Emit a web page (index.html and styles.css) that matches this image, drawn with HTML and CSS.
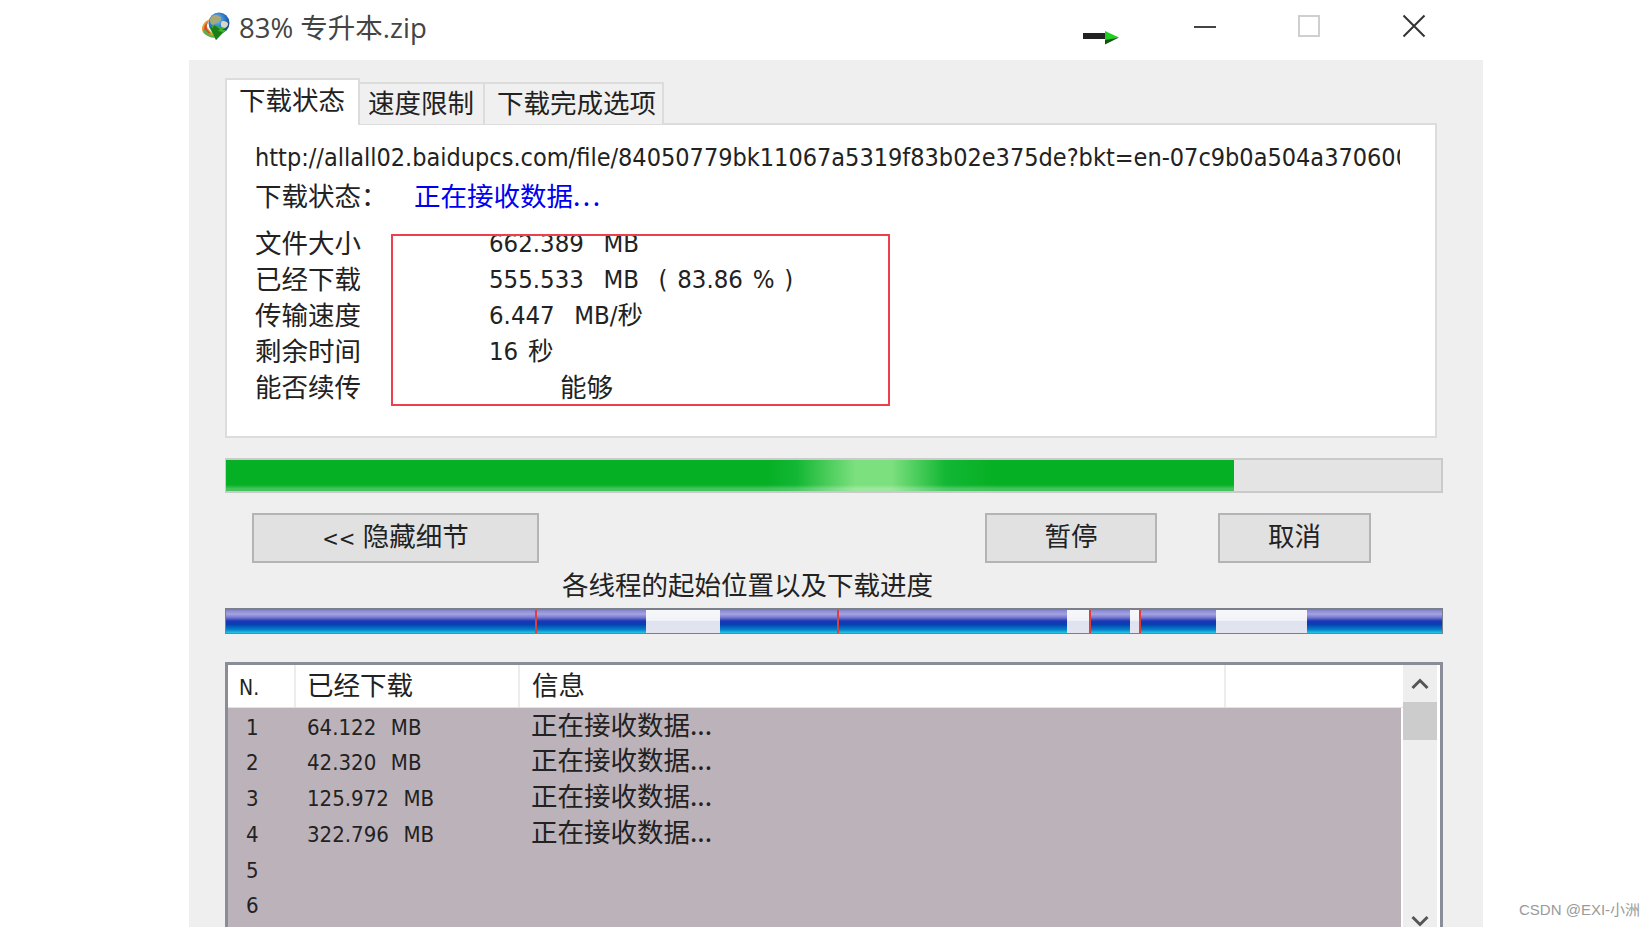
FILE: index.html
```html
<!DOCTYPE html>
<html lang="zh-CN">
<head>
  <meta charset="UTF-8" />
  <title>83% 专升本.zip</title>
  <link rel="stylesheet" href="styles.css">
</head>
<body>
  <div class="window">
    <div class="titlebar">
      <svg class="app-icon" width="30" height="28" viewBox="0 0 30 28">
        <defs>
          <radialGradient id="globe" cx="0.4" cy="0.35" r="0.7">
            <stop offset="0" stop-color="#7fc4ee"/>
            <stop offset="0.6" stop-color="#2672c4"/>
            <stop offset="1" stop-color="#123f7a"/>
          </radialGradient>
        </defs>
        <circle cx="18" cy="11" r="10.500" fill="url(#globe)"/>
        <path d="M14 3c3 0 6 1 6 4s-4 3-6 5-5 0-5-3 2-6 5-6z" fill="#a9a878"/>
        <path d="M22 9c2 0 5 1 5 3s-2 4-4 4-3-1-3-3 0-4 2-4z" fill="#d8d8c4"/>
        <path d="M1 17c0-5 4-9 9-10-3 2-5 5-4 8l3 4 6 5c-7 1-14-1-14-7z" fill="#e0a030"/>
        <path d="M3 17c0-3 2-6 5-8-2 3-3 5-2 8l4 5c-3-1-7-2-7-5z" fill="#d8462c"/>
        <path d="M5 18c1 3 6 6 11 6l-1 2c-6 0-13-3-13-9z" fill="#5cb04a"/>
        <path d="M11 13l13 3-3 2 4 0-10 10-7-13 3 1z" fill="#3cb52c"/>
        <path d="M15 28l-6-13 3 1 1-3 6 4-2 2 5 1z" fill="#1a7f1a"/>
      </svg>
      <span class="title">83% 专升本.zip</span>
      <svg class="arrow" width="36" height="14" viewBox="0 0 36 14">
        <rect x="0" y="2" width="24" height="6" fill="#222"/>
        <path d="M22 0l14 6.500-14 3z" fill="#1fd01f"/>
        <path d="M22 9l14-2.500-14 7z" fill="#0c5a0c"/>
      </svg>
      <svg class="caption cap-min" width="22" height="2" viewBox="0 0 22 2"><rect width="22" height="2" fill="#444"/></svg>
      <svg class="caption cap-max" width="22" height="22" viewBox="0 0 22 22"><rect x="1" y="1" width="20" height="20" fill="none" stroke="#cfcfcf" stroke-width="2"/></svg>
      <svg class="caption cap-close" width="24" height="24" viewBox="0 0 24 24"><path d="M1.500 1.500l21 21M22.500 1.500l-21 21" stroke="#333" stroke-width="2" fill="none"/></svg>
    </div>

    <div class="panel">
      <div class="tabs">
        <div class="tab active">下载状态</div>
        <div class="tab second">速度限制</div>
        <div class="tab third">下载完成选项</div>
      </div>

      <div class="tab-content">
        <div class="url">http://allall02.baidupcs.com/file/84050779bk11067a5319f83b02e375de?bkt=en-07c9b0a504a370600</div>
        <div class="status-row">
          <span class="status-label">下载状态：</span>
          <span class="status-value">正在接收数据<span class="dots">...</span></span>
        </div>
        <div class="details">
          <div class="red-box"></div>
          <div class="detail"><span class="label">文件大小</span><span class="value">662.389  MB</span></div>
          <div class="detail"><span class="label">已经下载</span><span class="value">555.533  MB  ( 83.86 % )</span></div>
          <div class="detail"><span class="label">传输速度</span><span class="value">6.447  MB/秒</span></div>
          <div class="detail"><span class="label">剩余时间</span><span class="value">16 秒</span></div>
          <div class="detail"><span class="label">能否续传</span><span class="value can-resume">能够</span></div>
        </div>
      </div>

      <div class="progress">
        <div class="progress-fill" style="width: 1008px"></div>
      </div>

      <div class="buttons">
        <button class="btn btn-details"><span class="chevrons">&lt;&lt;</span> 隐藏细节</button>
        <button class="btn btn-pause">暂停</button>
        <button class="btn btn-cancel">取消</button>
      </div>

      <div class="threads-label">各线程的起始位置以及下载进度</div>
      <div class="threads">
        <div class="seg" style="width: 309px"></div>
        <div class="seg start" style="width: 111px"></div>
        <div class="seg free" style="width: 74px"></div>
        <div class="seg" style="width: 117px"></div>
        <div class="seg start" style="width: 230px"></div>
        <div class="seg free" style="width: 22px"></div>
        <div class="seg start" style="width: 41px"></div>
        <div class="seg free" style="width: 9px"></div>
        <div class="seg start" style="width: 77px"></div>
        <div class="seg free" style="width: 91px"></div>
        <div class="seg grow"></div>
      </div>

      <div class="list">
        <div class="table">
          <div class="table-head">
            <div class="th th-n">N.</div>
            <div class="th th-size">已经下载</div>
            <div class="th th-info">信息</div>
            <div class="th th-rest"></div>
          </div>
          <div class="table-body">
            <div class="row"><span class="num">1</span><span class="size">64.122  MB</span><span class="info">正在接收数据...</span></div>
            <div class="row"><span class="num">2</span><span class="size">42.320  MB</span><span class="info">正在接收数据...</span></div>
            <div class="row"><span class="num">3</span><span class="size">125.972  MB</span><span class="info">正在接收数据...</span></div>
            <div class="row"><span class="num">4</span><span class="size">322.796  MB</span><span class="info">正在接收数据...</span></div>
            <div class="row"><span class="num">5</span></div>
            <div class="row"><span class="num">6</span></div>
          </div>
        </div>
        <div class="scrollbar">
          <div class="scroll-btn">
            <svg width="18" height="12" viewBox="0 0 18 12"><path d="M1.500 10L9 2.500 16.500 10" fill="none" stroke="#555" stroke-width="3"/></svg>
          </div>
          <div class="scroll-thumb"></div>
          <div class="scroll-track"></div>
          <div class="scroll-btn">
            <svg width="18" height="12" viewBox="0 0 18 12"><path d="M1.500 2L9 9.500 16.500 2" fill="none" stroke="#555" stroke-width="3"/></svg>
          </div>
        </div>
      </div>
    </div>
  </div>

  <div class="watermark">CSDN @EXI-小洲</div>
</body>
</html>
```

FILE: styles.css
```css
html, body {
  height: 927px;
  overflow: hidden;
}
body {
  margin: 0;
  background-color: #fff;
  color: #222;
  font-family: "DejaVu Sans", "Noto Sans CJK SC", sans-serif;
  font-stretch: condensed;
  font-size: 25px;
}
.window {
  width: 1294px;
  margin-left: 189px;
}

/* title bar */
.titlebar {
  display: flex;
  align-items: center;
  height: 60px;
  padding: 0 57px 8px 12px;
  box-sizing: border-box;
}
.app-icon {
  flex: none;
}
.title {
  margin-left: 8px;
  margin-top: -1px;
  font-family: "Open Sans", "Noto Sans CJK SC", sans-serif;
  font-stretch: normal;
  font-size: 27.500px;
  color: #444;
}
.arrow {
  margin-left: auto;
  margin-top: 24px;
}
.caption {
  flex: none;
}
.cap-min {
  margin-left: 75px;
  margin-top: 2px;
}
.cap-max {
  margin-left: 82px;
}
.cap-close {
  margin-left: 82px;
}

.panel {
  height: 867px;
  box-sizing: border-box;
  padding: 18px 40px 0 36px;
  background-color: #efefef;
}

/* tabs */
.tabs {
  display: flex;
  align-items: flex-end;
  height: 46px;
  position: relative;
}
.tab {
  height: 42px;
  box-sizing: border-box;
  border: 2px solid #dcdcdc;
  border-bottom: none;
  border-left: none;
  background-color: #f0f0f0;
  font-size: 26.500px;
  font-family: "Noto Sans CJK SC", sans-serif;
  line-height: 36px;
  color: #222;
}
.tab.active {
  height: 47px;
  margin-bottom: -1px;
  width: 135px;
  padding-left: 12px;
  border-left: 2px solid #dcdcdc;
  background-color: #fff;
  line-height: 38px;
  position: relative;
}
.tab.second {
  width: 125px;
  padding-left: 8px;
}
.tab.third {
  width: 179px;
  padding-left: 12px;
}

.tab-content {
  width: 1212px;
  height: 315px;
  box-sizing: border-box;
  margin-top: -1px;
  padding: 15px 0 0 28px;
  border: 2px solid #dcdcdc;
  background-color: #fff;
}
.url {
  width: 1145px;
  height: 36px;
  overflow: hidden;
  white-space: nowrap;
  line-height: 36px;
  font-size: 25px;
}
.status-row {
  display: flex;
  margin-top: 1px;
  height: 36px;
  line-height: 36px;
  font-size: 26.500px;
  font-family: "Noto Sans CJK SC", sans-serif;
}
.status-label {
  width: 159px;
}
.status-value {
  color: #0000f0;
}
.dots {
  letter-spacing: 2.500px;
}

.details {
  position: relative;
  margin-top: 12px;
}
.red-box {
  position: absolute;
  left: 136px;
  top: 9px;
  width: 495px;
  height: 168px;
  border: 2px solid #ef3f4c;
}
.detail {
  display: flex;
  height: 36px;
  line-height: 34px;
}
.label {
  width: 234px;
  font-family: "Noto Sans CJK SC", sans-serif;
  font-size: 26.500px;
}
.value {
  white-space: pre;
  font-size: 25.500px;
  word-spacing: 2.500px;
  line-height: 36px;
}
.can-resume {
  margin-left: 71px;
  line-height: 34px;
  font-family: "Noto Sans CJK SC", sans-serif;
  font-size: 26.500px;
}

/* main progress bar */
.progress {
  height: 35px;
  box-sizing: border-box;
  margin-top: 20px;
  border: 2px solid #cacaca;
  border-left-width: 1px;
  background-color: #e4e4e4;
}
.progress-fill {
  height: 100%;
  background:
    linear-gradient(to bottom, rgba(255,255,255,0) 80%, rgba(255,255,255,0.25) 92%, rgba(255,255,255,0.25) 100%),
    linear-gradient(to right, #05b024 0, #05b024 540px, #12b733 570px, #7de07f 630px, #7de07f 665px, #12b733 720px, #05b024 770px, #05b024 100%);
}

/* buttons */
.buttons {
  display: flex;
  height: 50px;
  margin-top: 20px;
  padding: 0 72px 0 27px;
}
.btn {
  box-sizing: border-box;
  height: 50px;
  padding: 0 0 7px;
  border: 2px solid #b4b4b4;
  background-color: #e1e1e1;
  color: #222;
  font-family: "DejaVu Sans", "Noto Sans CJK SC", sans-serif;
  font-stretch: condensed;
  font-size: 26.500px;
}
.chevrons {
  font-size: 22px;
}
.btn-details {
  width: 287px;
}
.btn-pause {
  width: 172px;
  margin-left: auto;
}
.btn-cancel {
  width: 153px;
  margin-left: 61px;
}

.threads-label {
  height: 36px;
  margin-top: 4px;
  padding-left: 337px;
  line-height: 34px;
  font-size: 26.500px;
  font-family: "Noto Sans CJK SC", sans-serif;
}

/* thread map */
.threads {
  display: flex;
  height: 26px;
  box-sizing: border-box;
  margin-top: 5px;
  border: 1px solid #7a7f8a;
  border-top-width: 2px;
}
.seg {
  flex: none;
  box-sizing: border-box;
  background: linear-gradient(to bottom, #8585d0 0, #a4a4e2 18%, #7a7ad0 32%, #1c36b8 48%, #0540b0 62%, #0580c8 85%, #25c8e6 100%);
}
.seg.start {
  border-left: 2px solid #dc4038;
}
.seg.free {
  background: linear-gradient(to bottom, #f7f8fb 0, #f2f3f8 45%, #dfe3ef 50%, #e2e5f0 100%);
}
.seg.grow {
  flex: 1;
}

/* thread list */
.list {
  display: flex;
  height: 280px;
  box-sizing: border-box;
  margin-top: 28px;
  border: 3px solid #8a8c98;
  background-color: #fff;
}
.table {
  flex: 1;
  display: flex;
  flex-direction: column;
}
.table-head {
  display: flex;
  height: 43px;
  flex: none;
  box-sizing: border-box;
  border-bottom: 1px solid #e2e2e2;
  font-family: "Noto Sans CJK SC", sans-serif;
  font-size: 26.500px;
  line-height: 38px;
}
.th {
  box-sizing: border-box;
  border-right: 2px solid #ececec;
}
.th-n {
  width: 68px;
  padding-left: 11px;
  font-family: "DejaVu Sans", sans-serif;
  font-size: 21px;
  line-height: 46px;
}
.th-size {
  width: 224px;
  padding-left: 11px;
}
.th-info {
  width: 706px;
  padding-left: 12px;
}
.th-rest {
  flex: 1;
  border-right: none;
}
.table-body {
  flex: 1;
  margin-right: 2px;
  padding-top: 1.500px;
  background-color: #bcb2ba;
}
.row {
  display: flex;
  height: 35.800px;
  line-height: 35.800px;
  font-size: 22px;
}
.num {
  width: 67px;
  padding-left: 18px;
  box-sizing: border-box;
}
.size {
  width: 224px;
  padding-left: 12px;
  box-sizing: border-box;
  white-space: pre;
  word-spacing: 1px;
}
.info {
  padding-left: 12px;
  font-family: "Noto Sans CJK SC", sans-serif;
  font-size: 26.500px;
  line-height: 28px;
}

.scrollbar {
  display: flex;
  flex-direction: column;
  flex: none;
  width: 34px;
  margin-right: 3px;
  background-color: #eee;
}
.scroll-btn {
  display: flex;
  align-items: center;
  justify-content: center;
  height: 37px;
  flex: none;
}
.scroll-thumb {
  height: 38px;
  flex: none;
  background-color: #ccc;
}
.scroll-track {
  flex: 1;
}

.watermark {
  position: absolute;
  left: 1519px;
  top: 898px;
  font-family: "Liberation Sans", "Noto Sans CJK SC", sans-serif;
  font-stretch: normal;
  font-size: 15px;
  line-height: 24px;
  color: #9a9a9a;
}
```
